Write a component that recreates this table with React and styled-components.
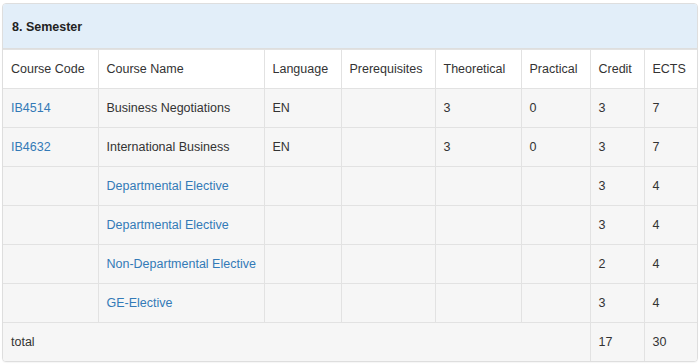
import styled, { createGlobalStyle } from 'styled-components';

const GlobalStyle = createGlobalStyle`
    body {
        margin: 0;
        background: #fff;
        font-family: 'Liberation Sans', Arial, sans-serif;
        color: #333;
    }
`;

const columns = [
    { title: 'Course Code', width: 95 },
    { title: 'Course Name', width: 166 },
    { title: 'Language', width: 77 },
    { title: 'Prerequisites', width: 94 },
    { title: 'Theoretical', width: 86 },
    { title: 'Practical', width: 69 },
    { title: 'Credit', width: 54 },
    { title: 'ECTS', width: 53 },
];

const courses = [
    { code: 'IB4514', name: 'Business Negotiations', lang: 'EN', pre: '', th: 3, pr: 0, credit: 3, ects: 7 },
    { code: 'IB4632', name: 'International Business', lang: 'EN', pre: '', th: 3, pr: 0, credit: 3, ects: 7 },
    { code: '', name: 'Departmental Elective', lang: '', pre: '', th: '', pr: '', credit: 3, ects: 4, elective: true },
    { code: '', name: 'Departmental Elective', lang: '', pre: '', th: '', pr: '', credit: 3, ects: 4, elective: true },
    { code: '', name: 'Non-Departmental Elective', lang: '', pre: '', th: '', pr: '', credit: 2, ects: 4, elective: true },
    { code: '', name: 'GE-Elective', lang: '', pre: '', th: '', pr: '', credit: 3, ects: 4, elective: true },
];

const App = () => {
    return (
        <Page>
            <GlobalStyle />
            <Panel>
                <Heading>8. Semester</Heading>
                <Table>
                    <colgroup>
                        {columns.map((c) => (
                            <col key={c.title} style={{ width: c.width }} />
                        ))}
                    </colgroup>
                    <thead>
                        <HeadRow>
                            {columns.map((c) => (
                                <Cell as="th" key={c.title}>
                                    {c.title}
                                </Cell>
                            ))}
                        </HeadRow>
                    </thead>
                    <tbody>
                        {courses.map((c, idx) => (
                            <BodyRow key={idx}>
                                <Cell>{c.code && <Link href="#">{c.code}</Link>}</Cell>
                                <Cell>{c.elective ? <Link href="#">{c.name}</Link> : c.name}</Cell>
                                <Cell>{c.lang}</Cell>
                                <Cell>{c.pre}</Cell>
                                <Cell>{c.th}</Cell>
                                <Cell>{c.pr}</Cell>
                                <Cell>{c.credit}</Cell>
                                <Cell>{c.ects}</Cell>
                            </BodyRow>
                        ))}
                        <BodyRow>
                            <Cell colSpan={6}>total</Cell>
                            <Cell>17</Cell>
                            <Cell>30</Cell>
                        </BodyRow>
                    </tbody>
                </Table>
            </Panel>
        </Page>
    );
};

const Page = styled.div`
    padding: 3px 2px;
`;

const Panel = styled.div`
    width: 696px;
    box-sizing: border-box;
    border: 1px solid #dedede;
    border-radius: 4px;
    overflow: hidden;
    background: #fff;
    box-shadow: 0 1px 1px rgba(0, 0, 0, 0.04);
`;

const Heading = styled.div`
    background: #e2eef9;
    color: #222;
    font-weight: bold;
    font-size: 12.5px;
    line-height: 18px;
    padding: 14px 9px 12px 9px;
    border-bottom: 1px solid #dedede;
`;

const Table = styled.table`
    width: 100%;
    table-layout: fixed;
    border-collapse: collapse;
    font-size: 12.5px;
`;

const HeadRow = styled.tr`
    background: #fff;
`;

const BodyRow = styled.tr`
    background: #f6f6f6;

    &:last-child td {
        border-bottom: 0;
    }
`;

const Cell = styled.td`
    padding: 10px 8px;
    line-height: 18px;
    height: 18px;
    text-align: left;
    font-weight: normal;
    color: #333;
    border: 1px solid #e2e2e2;
    white-space: nowrap;

    &:first-child {
        border-left: 0;
    }

    &:last-child {
        border-right: 0;
    }
`;

const Link = styled.a`
    color: #337ab7;
    text-decoration: none;
`;

export default App;
